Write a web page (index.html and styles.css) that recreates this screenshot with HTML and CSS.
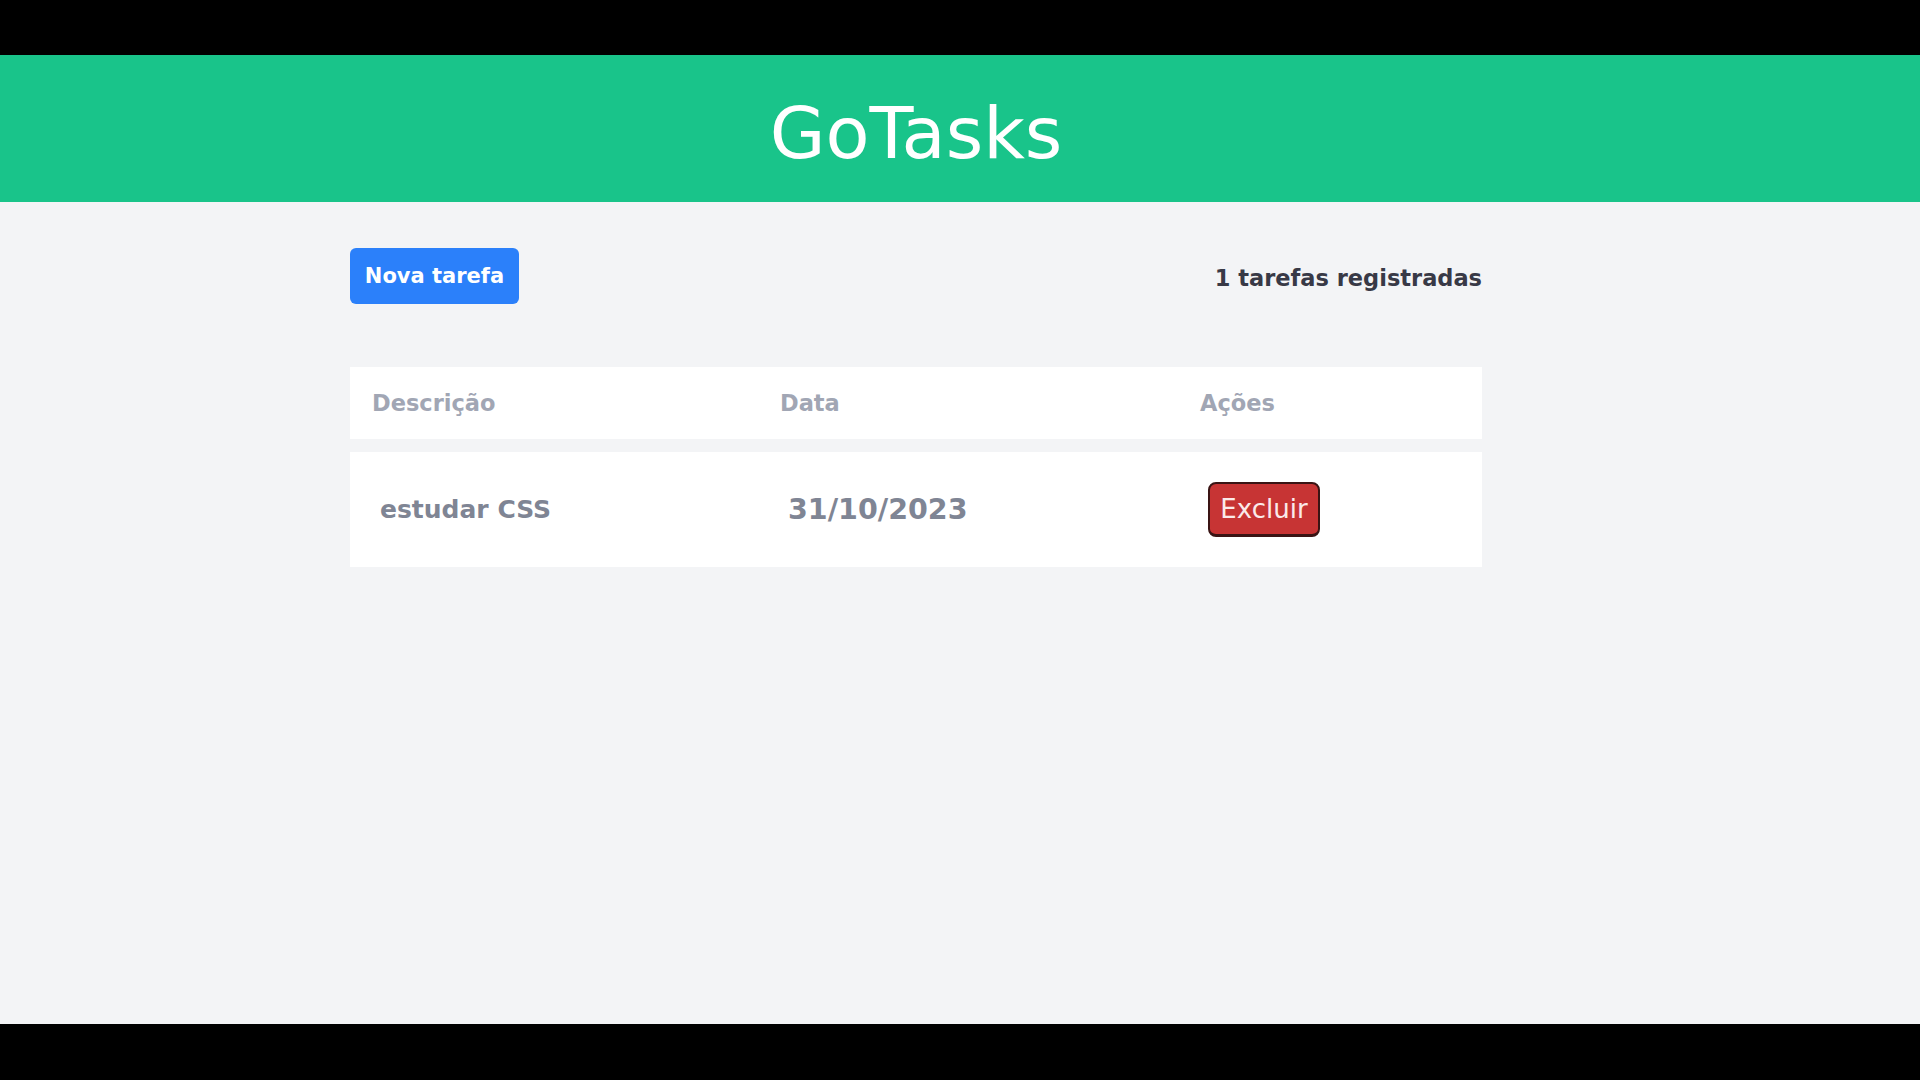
FILE: index.html
```html
<!DOCTYPE html>
<html lang="pt-BR">
<head>
<meta charset="utf-8">
<title>GoTasks</title>
<link rel="stylesheet" href="styles.css">
</head>
<body>
<div class="screen">
  <div class="app">
    <header class="topbar">
      <h1 class="brand">GoTasks</h1>
    </header>
    <main class="content">
      <div class="toolbar">
        <button class="btn-new">Nova tarefa</button>
        <span class="count">1 tarefas registradas</span>
      </div>
      <div class="table">
        <div class="thead">
          <div class="th">Descrição</div>
          <div class="th">Data</div>
          <div class="th">Ações</div>
        </div>
        <div class="trow">
          <div class="td desc">estudar CSS</div>
          <div class="td date">31/10/2023</div>
          <div class="td"><button class="btn-del">Excluir</button></div>
        </div>
      </div>
    </main>
  </div>
</div>
</body>
</html>
```
FILE: styles.css
```css
* { box-sizing: border-box; }
html, body { margin: 0; padding: 0; background: #000; }
body { font-family: "DejaVu Sans", Verdana, sans-serif; }

.screen {
  width: 1920px;
  height: 1080px;
  padding: 55px 0 56px;
  background: #000;
}

.app {
  height: 969px;
  background: #f3f4f6;
}

.topbar {
  height: 147px;
  background: #19c48a;
  display: flex;
  align-items: center;
  justify-content: center;
  width: 1920px;
  padding-right: 88px;
}

.brand {
  margin: 0;
  color: #ffffff;
  font-weight: normal;
  font-size: 72px;
  line-height: 1;
  padding-top: 8px;
}

.content {
  width: 1132px;
  margin-left: 350px;
}

.toolbar {
  margin-top: 46px;
  display: flex;
  justify-content: space-between;
  align-items: center;
}

.btn-new {
  height: 56px;
  width: 169px;
  border: none;
  border-radius: 6px;
  background: #2b80fa;
  color: #ffffff;
  font-family: "DejaVu Sans", Verdana, sans-serif;
  font-weight: bold;
  font-size: 21px;
  padding: 0;
}

.count {
  font-weight: bold;
  font-size: 22.5px;
  color: #383946;
  margin-top: 4px;
}

.table {
  margin-top: 63px;
  display: flex;
  flex-direction: column;
  gap: 13px;
}

.thead, .trow {
  display: grid;
  grid-template-columns: 408px 420px 304px;
  background: #ffffff;
  align-items: center;
}

.thead { height: 72px; }
.trow { height: 115px; }

.th {
  padding-left: 22px;
  font-weight: bold;
  font-size: 22.5px;
  color: #a1a6b4;
}

.td {
  padding-left: 30px;
  font-weight: bold;
  color: #7f8594;
}

.td.desc { font-size: 25px; padding-left: 30px; }
.td.date { font-size: 28.5px; }

.btn-del {
  width: 112px;
  height: 55px;
  background: #c73434;
  border: 2px solid #3a1414;
  border-bottom-width: 3px;
  border-radius: 8px;
  color: #fbeaea;
  font-family: "DejaVu Sans", Verdana, sans-serif;
  font-size: 26px;
  padding: 0;
}
```
